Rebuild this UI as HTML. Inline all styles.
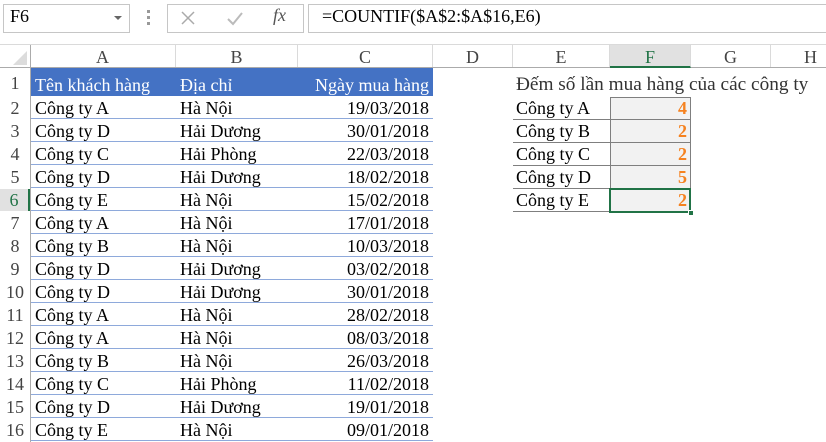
<!DOCTYPE html>
<html><head><meta charset="utf-8"><style>
*{margin:0;padding:0;box-sizing:border-box}
body{width:826px;height:442px;background:#fff;position:relative;overflow:hidden;font-family:"Liberation Serif",serif;font-size:18px;color:#000}
.a{position:absolute}
.box{position:absolute;border:1px solid #c6c6c6;background:#fff}
.ch{position:absolute;top:45px;height:22px;line-height:24px;text-align:center;color:#444;font-size:18px;border-right:1px solid #dadada}
.rh{position:absolute;left:0;width:30px;text-align:center;color:#444;font-size:18px}
.cell{position:absolute;height:23px;line-height:24px;white-space:nowrap}
</style></head><body>
<div class="box" style="left:3px;top:4px;width:127px;height:29px"></div>
<div class="a" style="left:10px;top:6px;font-size:18px">F6</div>
<div class="a" style="left:114px;top:16px;width:0;height:0;border-left:4px solid transparent;border-right:4px solid transparent;border-top:4px solid #666"></div>
<div class="a" style="left:147px;top:10px;width:3px;height:3px;background:#999"></div>
<div class="a" style="left:147px;top:16px;width:3px;height:3px;background:#999"></div>
<div class="a" style="left:147px;top:22px;width:3px;height:3px;background:#999"></div>
<div class="box" style="left:167px;top:4px;width:137px;height:29px"></div>
<svg class="a" style="left:180px;top:10px" width="16" height="16"><path d="M2 2L14 14M14 2L2 14" stroke="#aaa" stroke-width="1.5"/></svg>
<svg class="a" style="left:226px;top:10px" width="18" height="16"><path d="M2 9L7 14L16 3" stroke="#bbb" stroke-width="2" fill="none"/></svg>
<div class="a" style="left:273px;top:5px;font-style:italic;font-size:18px;color:#555">fx</div>
<div class="box" style="left:308px;top:4px;width:530px;height:29px"></div>
<div class="a" style="left:322px;top:6px;font-size:18px">=COUNTIF($A$2:$A$16,E6)</div>
<div class="a" style="left:0;top:44px;width:826px;height:1px;background:#dadada"></div>
<div class="a" style="left:0;top:67px;width:826px;height:1px;background:#ababab"></div>
<div class="a" style="left:30px;top:45px;width:1px;height:397px;background:#ababab"></div>
<svg class="a" style="left:12px;top:50px" width="16" height="16"><path d="M15 1V15H1Z" fill="#dcdcdc"/></svg>
<div class="ch" style="left:30px;width:146px">A</div>
<div class="ch" style="left:176px;width:122px">B</div>
<div class="ch" style="left:298px;width:135px">C</div>
<div class="ch" style="left:433px;width:80px">D</div>
<div class="ch" style="left:513px;width:97px">E</div>
<div class="ch" style="left:610px;width:81px;background:#e1e1e1;color:#217346;border-bottom:2px solid #217346;height:23px">F</div>
<div class="ch" style="left:691px;width:80px">G</div>
<div class="ch" style="left:771px;width:80px">H</div>
<div class="a" style="left:31px;top:68px;width:402px;height:28px;background:#4472c4"></div>
<div class="rh" style="top:73px">1</div>
<div class="cell" style="left:35px;top:73px;color:#fff">Tên khách hàng</div>
<div class="cell" style="left:180px;top:73px;color:#fff">Địa chỉ</div>
<div class="cell" style="left:298px;width:131px;text-align:right;top:73px;color:#fff">Ngày mua hàng</div>
<div id="rows"></div>
<div class="cell" style="left:516px;top:73px;color:#333;font-size:19.3px">Đếm số lần mua hàng của các công ty</div>
<div id="sum"></div>
<div class="a" style="left:609px;top:188px;width:82px;height:25px;border:2px solid #217346"></div>
<div class="a" style="left:688px;top:210px;width:6px;height:6px;background:#217346;border:1px solid #fff"></div>
<script>
var d=[["A","Hà Nội","19/03/2018"],["D","Hải Dương","30/01/2018"],["C","Hải Phòng","22/03/2018"],["D","Hải Dương","18/02/2018"],["E","Hà Nội","15/02/2018"],["A","Hà Nội","17/01/2018"],["B","Hà Nội","10/03/2018"],["D","Hải Dương","03/02/2018"],["D","Hải Dương","30/01/2018"],["A","Hà Nội","28/02/2018"],["A","Hà Nội","08/03/2018"],["B","Hà Nội","26/03/2018"],["C","Hải Phòng","11/02/2018"],["D","Hải Dương","19/01/2018"],["E","Hà Nội","09/01/2018"]];
var h="";
d.forEach(function(r,i){var t=96+i*23;
h+='<div class="rh" style="top:'+(t+1)+'px;height:22px;line-height:23px;'+(i==4?'background:#e1e1e1;color:#217346;border-right:2px solid #217346':'')+'">'+(i+2)+'</div>';
h+='<div class="cell" style="left:35px;top:'+t+'px">Công ty '+r[0]+'</div>';
h+='<div class="cell" style="left:180px;top:'+t+'px">'+r[1]+'</div>';
h+='<div class="cell" style="left:298px;width:131px;text-align:right;top:'+t+'px">'+r[2]+'</div>';
h+='<div class="a" style="left:31px;top:'+(t+22)+'px;width:402px;height:1px;background:#8ea9db"></div>';});
document.getElementById("rows").innerHTML=h;
var s=[["A",4],["B",2],["C",2],["D",5],["E",2]],g="";
s.forEach(function(r,i){var t=97+i*23;
g+='<div class="a" style="left:610px;top:'+t+'px;width:81px;height:23px;background:#f2f2f2;border:1px solid #7f7f7f;'+(i>0?'border-top:none;':'')+'"></div>';
g+='<div class="cell" style="left:516px;top:'+(t-1)+'px">Công ty '+r[0]+'</div>';
g+='<div class="a" style="left:513px;top:'+(t+22)+'px;width:97px;height:1px;background:#7f7f7f"></div>';
g+='<div class="cell" style="left:610px;width:77px;text-align:right;top:'+(t-1)+'px;color:#f58220;font-weight:bold">'+r[1]+'</div>';});
document.getElementById("sum").innerHTML=g;
</script>
</body></html>
